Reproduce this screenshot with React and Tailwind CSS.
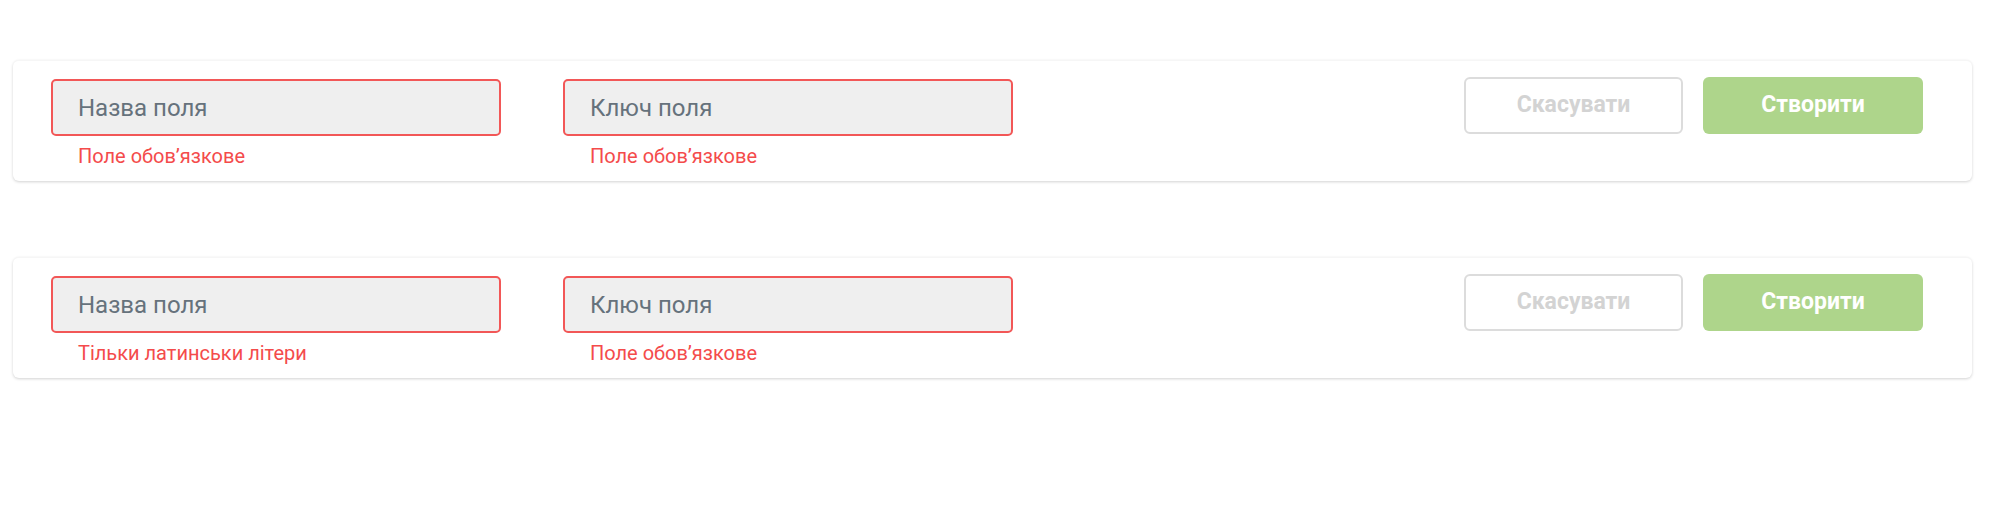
import React from 'react';

const font = { fontFamily: 'Roboto, "Noto Sans", sans-serif' };

const Field = ({ placeholder, error }) => (
  <div className="flex flex-col w-[450px]">
    <input
      type="text"
      placeholder={placeholder}
      className="h-[57px] w-full rounded-[5px] border-2 border-[#f25757] bg-[#efefef] px-[25px] text-[24px] text-[#5f6b75] placeholder:text-[#66727c] outline-none"
    />
    <span className="mt-[6px] pl-[27px] text-[20px] leading-[28px] text-[#f44b4b]">
      {error}
    </span>
  </div>
);

const FieldForm = ({ nameError, keyError }) => (
  <div className="ml-[13px] w-[1959px] rounded-[6px] bg-white border-t border-[#f6f6f6] shadow-[0_1px_3px_rgba(0,0,0,0.18)] pl-[38px] pr-[49px] pt-[18px] pb-[11px] flex items-start">
    <div className="flex gap-[62px]">
      <Field placeholder="Назва поля" error={nameError} />
      <Field placeholder="Ключ поля" error={keyError} />
    </div>
    <div className="ml-auto flex gap-[20px] -mt-[2px]">
      <button
        type="button"
        className="h-[57px] w-[219px] rounded-[6px] border-2 border-[#dcdcdc] bg-white text-[23px] font-bold text-[#d3d3d3]"
      >
        Скасувати
      </button>
      <button
        type="button"
        className="h-[57px] w-[220px] rounded-[6px] bg-[#aed58b] text-[23px] font-bold text-white"
      >
        Створити
      </button>
    </div>
  </div>
);

export default function App() {
  return (
    <div className="min-h-[526px] w-[2014px] bg-white pt-[60px]" style={font}>
      <FieldForm nameError="Поле обовʼязкове" keyError="Поле обовʼязкове" />
      <div className="h-[76px]" />
      <FieldForm nameError="Тільки латинськи літери" keyError="Поле обовʼязкове" />
    </div>
  );
}
